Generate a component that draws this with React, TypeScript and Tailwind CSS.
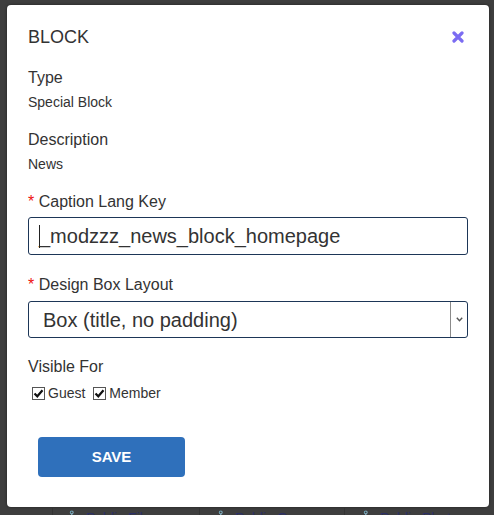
import type { FC } from 'react';

const font = "font-['Liberation_Sans',Arial,Helvetica,sans-serif]";

const Check: FC<{ label: string }> = ({ label }) => (
  <label className="flex items-center">
    <span className="flex h-[13px] w-[13px] items-center justify-center border border-[#555] bg-white">
      <svg width="11" height="11" viewBox="0 0 11 11">
        <path d="M1.5 5.5 L4.3 8.3 L9.5 2.3" fill="none" stroke="#111" strokeWidth="2.2" />
      </svg>
    </span>
    <span className="ml-[3px] text-[14px] leading-[18px] text-[#333]">{label}</span>
  </label>
);

const Required: FC<{ text: string }> = ({ text }) => (
  <div className="text-[16px] leading-[20px] text-[#333]">
    <span className="text-[#e11]">*</span> {text}
  </div>
);

export default function App() {
  return (
    <div className={`${font} h-[515px] w-[494px] overflow-hidden bg-[#3e3e3e]`}>
      <div className="ml-[7px] mt-[5px] h-[502px] w-[482px] rounded-[4px] bg-white px-[21px] pt-[22px] shadow-[0_0_3px_rgba(0,0,0,0.5)]">
        <div className="flex h-[20px] items-center justify-between">
          <h2 className="text-[18px] leading-[20px] text-[#333]">BLOCK</h2>
          <svg width="12" height="12" viewBox="0 0 12 12" className="mr-[4px]">
            <path d="M2 2 L10 10 M10 2 L2 10" stroke="#7b6cf2" strokeWidth="3.2" strokeLinecap="round" />
          </svg>
        </div>

        <div className="mt-[21px] text-[16px] leading-[20px] text-[#333]">Type</div>
        <div className="mt-[5px] text-[14px] leading-[18px] text-[#333]">Special Block</div>

        <div className="mt-[19px] text-[16px] leading-[20px] text-[#333]">Description</div>
        <div className="mt-[5px] text-[14px] leading-[18px] text-[#333]">News</div>

        <div className="mt-[19px]">
          <Required text="Caption Lang Key" />
        </div>
        <div className="mt-[5px] flex h-[38px] items-center rounded-[3px] border border-[#1d3657] pl-[10px]">
          <span className="relative text-[20px] leading-[24px] text-[#333]">
            <span className="absolute left-0 top-[1px] h-[23px] w-px bg-[#222]" />
            _modzzz_news_block_homepage
          </span>
        </div>

        <div className="mt-[20px]">
          <Required text="Design Box Layout" />
        </div>
        <div className="mt-[6px] flex h-[37px] items-stretch rounded-[3px] border border-[#1d3657]">
          <div className="flex flex-1 items-center pl-[14px] text-[20px] leading-[24px] text-[#333]">
            Box (title, no padding)
          </div>
          <div className="flex w-[17px] items-center justify-center border-l border-[#8a8a8a]">
            <svg width="7" height="5" viewBox="0 0 7 5">
              <path d="M0.8 0.8 L3.5 3.8 L6.2 0.8" fill="none" stroke="#555" strokeWidth="1.4" />
            </svg>
          </div>
        </div>

        <div className="mt-[19px] text-[16px] leading-[20px] text-[#333]">Visible For</div>
        <div className="ml-[4px] mt-[7px] flex items-center gap-[8px]">
          <Check label="Guest" />
          <Check label="Member" />
        </div>

        <button className="ml-[10px] mt-[35px] h-[40px] w-[147px] rounded-[4px] bg-[#2f70bb] text-[15px] font-bold text-white">
          SAVE
        </button>
      </div>

      <div className="mt-[1px] flex h-[20px] text-[14px] text-[#2b2f66]">
        <div className="w-[53px] border-r border-[#333]" />
        <div className="flex w-[147px] gap-[6px] border-r border-[#333] pl-[10px]">
          <span>⚓</span>
          <span>Public Files</span>
        </div>
        <div className="flex w-[145px] gap-[6px] border-r border-[#333] pl-[12px]">
          <span>⚓</span>
          <span>Public Groups</span>
        </div>
        <div className="flex gap-[6px] pl-[12px]">
          <span>⚓</span>
          <span>Public Photos</span>
        </div>
      </div>
    </div>
  );
}
